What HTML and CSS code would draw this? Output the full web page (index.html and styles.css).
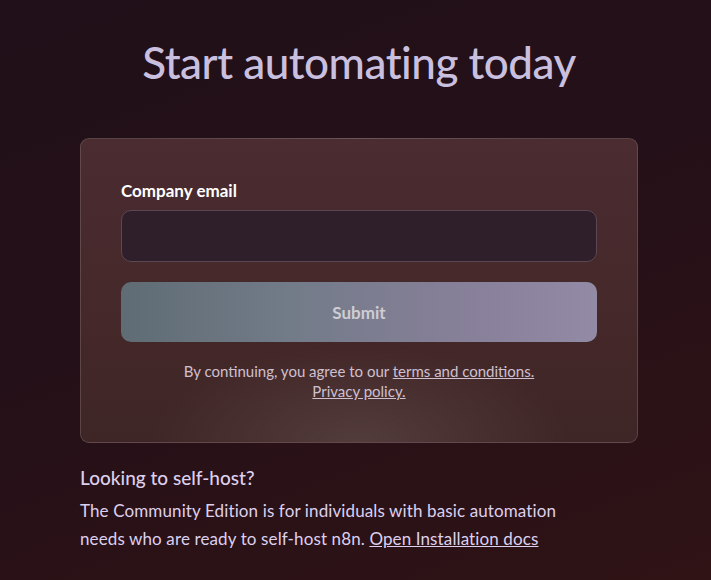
FILE: index.html
```html
<!DOCTYPE html>
<html lang="en">
<head>
<meta charset="utf-8">
<title>Start automating today</title>
<link rel="stylesheet" href="styles.css">
</head>
<body>
<main class="page">
  <h1 class="title">Start automating today</h1>
  <form class="card">
    <label class="label" for="email">Company email</label>
    <input class="input" id="email" type="email">
    <button class="submit" type="button">Submit</button>
    <p class="terms">By continuing, you agree to our <a href="#">terms and conditions.</a><br><a href="#">Privacy policy.</a></p>
  </form>
  <section class="selfhost">
    <h2 class="selfhost-title">Looking to self-host?</h2>
    <p class="selfhost-text">The Community Edition is for individuals with basic automation needs who are ready to self-host n8n. <a href="#">Open Installation docs</a></p>
  </section>
</main>
</body>
</html>
```
FILE: styles.css
```css
html, body {
  margin: 0;
  height: 100%;
}
body {
  background: linear-gradient(160deg, #211019 0%, #241018 45%, #2f1315 100%);
  font-family: "Lato", "Open Sans", sans-serif;
  color: #e8e0ec;
  overflow: hidden;
}
.page {
  width: 558px;
  margin-left: 80px;
  display: flex;
  flex-direction: column;
}
.title {
  margin: 34px 0 0;
  text-align: center;
  font-size: 44px;
  font-weight: 500;
  line-height: 56px;
  color: #c9bfdf;
  letter-spacing: -0.5px;
}
.card {
  margin-top: 48px;
  box-sizing: border-box;
  height: 305px;
  padding: 42px 40px 0;
  border: 1px solid rgba(255, 255, 255, 0.14);
  border-radius: 9px;
  background:
    radial-gradient(ellipse 260px 120px at 50% 100%, rgba(120, 100, 100, 0.35), transparent 80%),
    linear-gradient(180deg, #4a2c31 0%, #452829 60%, #3e2626 100%);
  display: flex;
  flex-direction: column;
}
.label {
  font-size: 17px;
  font-weight: 700;
  color: #ffffff;
  line-height: 20px;
}
.input {
  margin-top: 9px;
  height: 52px;
  box-sizing: border-box;
  border: 1px solid #5c4653;
  border-radius: 10px;
  background: #2f1f2b;
  outline: none;
}
.submit {
  margin-top: 20px;
  height: 60px;
  border: none;
  border-radius: 10px;
  background: linear-gradient(90deg, #5f6c74 0%, #727b88 35%, #867f98 70%, #938aa6 100%);
  color: #cfcdd2;
  font-family: inherit;
  font-size: 17px;
  font-weight: 700;
}
.terms {
  margin: 19px 0 0;
  text-align: center;
  font-size: 15px;
  line-height: 20px;
  color: #cfc0cf;
}
.terms a {
  color: inherit;
}
.selfhost {
  margin-top: 22px;
}
.selfhost-title {
  margin: 0;
  font-size: 19px;
  font-weight: 500;
  line-height: 26px;
  color: #ddd0ee;
}
.selfhost-text {
  margin: 6px 0 0;
  width: 495px;
  font-size: 17px;
  line-height: 28px;
  letter-spacing: 0.12px;
  color: #ddd0ee;
}
.selfhost-text a {
  color: inherit;
}
```
